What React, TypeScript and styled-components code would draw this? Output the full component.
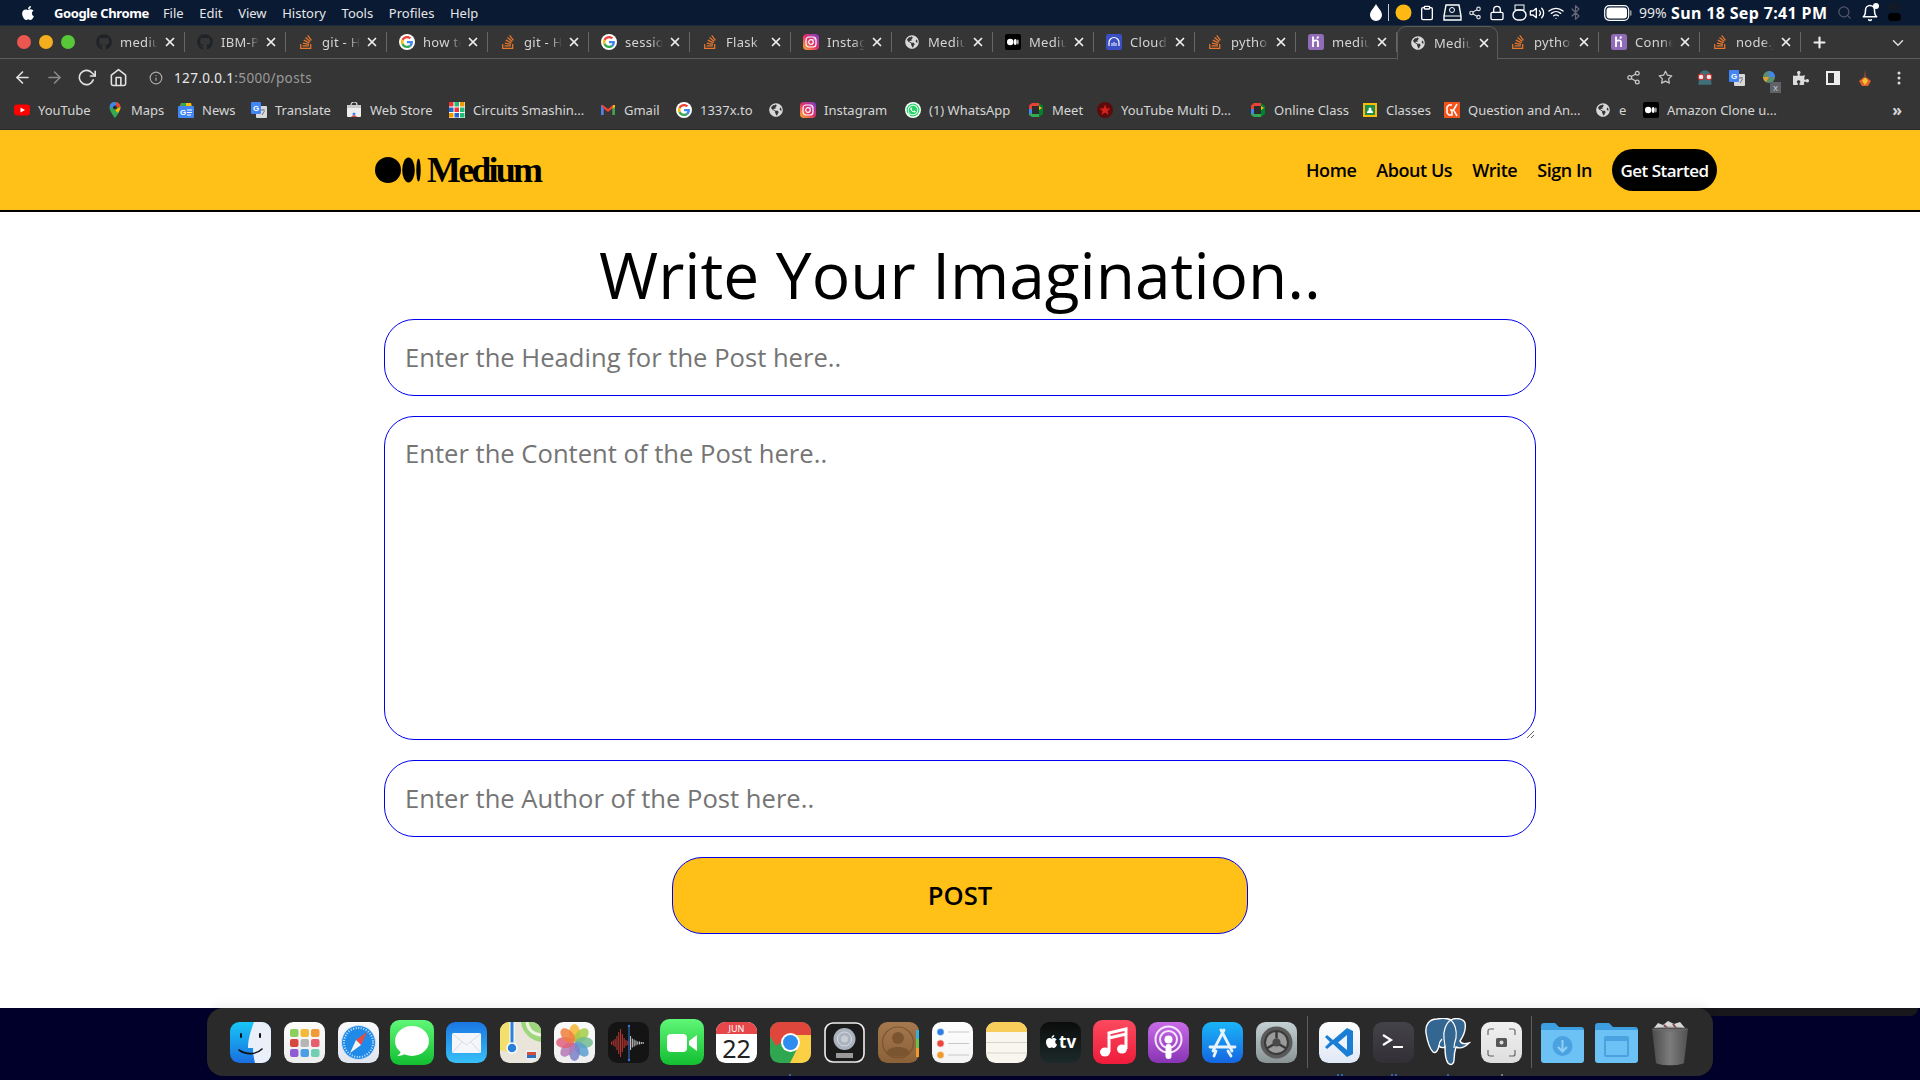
import React from 'react';
import styled, { createGlobalStyle } from 'styled-components';
import { FaApple, FaGithub, FaStackOverflow, FaWhatsapp, FaGlobeAmericas, FaPuzzlePiece } from 'react-icons/fa';
import { FiShare2, FiSearch, FiBell, FiArrowLeft, FiArrowRight, FiRotateCw, FiHome, FiInfo, FiPlus, FiChevronDown, FiX, FiStar, FiLock, FiWifi, FiBluetooth, FiVolume2, FiClipboard } from 'react-icons/fi';

const GlobalStyle = createGlobalStyle`
  html, body { margin: 0; padding: 0; background: #fff; }
  * { box-sizing: border-box; }
`;

const Screen = styled.div`
  position: relative;
  width: 1920px;
  height: 1080px;
  overflow: hidden;
  display: flex;
  flex-direction: column;
  font-family: "Open Sans", "Noto Sans", sans-serif;
`;

/* ---------- mac menu bar ---------- */
const MenuBar = styled.div`
  height: 25px;
  background: #0a1a33;
  display: flex;
  align-items: center;
  padding: 0 0 0 20px;
  color: #fff;
  font-family: "Noto Sans", sans-serif;
  font-size: 13px;
`;
const AppleMark = styled(FaApple)`
  font-size: 16px;
  margin-right: 18px;
`;
const MenuItem = styled.span<{ $bold?: boolean }>`
  font-weight: ${(p) => (p.$bold ? 700 : 400)};
  letter-spacing: ${(p) => (p.$bold ? '-0.38px' : '0')};
  margin-right: ${(p) => (p.$bold ? 14 : 15.6)}px;
  color: ${(p) => (p.$bold ? '#fff' : '#e6e6e6')};
`;
const StatusArea = styled.div`
  margin-left: auto;
  display: flex;
  align-items: center;
  height: 100%;
  width: 556px;
`;
const StatusIcon = styled.span<{ $w: number }>`
  width: ${(p) => p.$w}px;
  display: flex;
  justify-content: center;
  align-items: center;
  flex: none;
`;
const BatterySlot = styled.span`
  width: 50px;
  flex: none;
  display: flex;
  justify-content: flex-end;
  align-items: center;
  padding-right: 3px;
`;
const Percent = styled.span`
  font-size: 14px;
  color: #e6e6e6;
  margin: 0 4px 0 4px;
  width: 28px;
`;
const DateText = styled.span`
  font-size: 16px;
  font-weight: 700;
  letter-spacing: 0.35px;
  width: 164px;
  white-space: nowrap;
`;
const BellWrap = styled.span`
  position: relative;
  display: flex;
  &::after {
    content: '';
    position: absolute;
    top: -1px;
    right: 0;
    width: 6px;
    height: 6px;
    border-radius: 50%;
    background: #fff;
  }
`;

/* ---------- chrome tab strip ---------- */
const TabStrip = styled.div`
  position: relative;
  height: 34px;
  background: #353535;
  border-top: 1px solid #1d2a3a;
  border-bottom: 1px solid #5c5c5c;
  display: flex;
  align-items: center;
  padding-left: 17px;
  color: #ddd;
  font-family: "Noto Sans", sans-serif;
  font-size: 13px;
`;
const Lights = styled.div`
  display: flex;
  gap: 8px;
  width: 67px;
  flex: none;
`;
const Light = styled.i<{ $c: string }>`
  width: 14px;
  height: 14px;
  border-radius: 50%;
  background: ${(p) => p.$c};
`;
const Tab = styled.div<{ $active?: boolean }>`
  position: relative;
  width: 101px;
  height: ${(p) => (p.$active ? '34px' : '20px')};
  flex: none;
  display: flex;
  align-items: center;
  padding-left: 12px;
  border-right: 1px solid ${(p) => (p.$active ? 'transparent' : '#666')};
  ${(p) =>
    p.$active &&
    `
    background: #353535;
    border: 1px solid #5c5c5c;
    border-bottom: 1px solid #353535;
    border-radius: 9px 9px 0 0;
    margin-bottom: -1px;
  `}
`;
const TabIcon = styled.span`
  width: 16px;
  height: 16px;
  display: flex;
  align-items: center;
  justify-content: center;
  flex: none;
  margin-right: 8px;
`;
const TabTitle = styled.span`
  width: 38px;
  overflow: hidden;
  white-space: nowrap;
  color: #d4d4d4;
  letter-spacing: 0.3px;
  -webkit-mask-image: linear-gradient(to right, #000 70%, transparent 100%);
  mask-image: linear-gradient(to right, #000 70%, transparent 100%);
`;
const TabClose = styled(FiX)`
  position: absolute;
  left: 79px;
  top: 50%;
  margin-top: -7px;
  font-size: 14px;
  stroke-width: 3;
  color: #eee;
`;
const NewTab = styled(FiPlus)`
  margin-left: 10px;
  font-size: 17px;
  stroke-width: 3;
  color: #eee;
`;
const TabList = styled(FiChevronDown)`
  position: absolute;
  right: 13px;
  top: 8px;
  font-size: 18px;
  color: #ddd;
`;

/* ---------- address bar ---------- */
const Toolbar = styled.div`
  height: 37px;
  background: #353535;
  display: flex;
  align-items: center;
  padding-left: 13px;
  color: #ddd;
`;
const NavBtn = styled.span<{ $dim?: boolean }>`
  width: 32px;
  height: 20px;
  display: flex;
  align-items: center;
  color: ${(p) => (p.$dim ? '#8a8a8a' : '#e2e2e2')};
  font-size: 19px;
  flex: none;
`;
const SiteInfo = styled(FiInfo)`
  margin-left: 8px;
  font-size: 14px;
  color: #aaa;
  flex: none;
`;
const Url = styled.div`
  margin-left: 11px;
  font-family: "Noto Sans", sans-serif;
  font-size: 13.5px;
  letter-spacing: 0.35px;
  color: #9a9a9a;
`;
const UrlHost = styled.span`
  color: #e8e8e8;
`;
const ToolbarRight = styled.div`
  margin-left: auto;
  display: flex;
  align-items: center;
  padding-right: 5px;
`;
const ExtSlot = styled.span<{ $after?: number }>`
  position: relative;
  width: 32px;
  margin-right: ${(p) => p.$after ?? 0}px;
  display: flex;
  justify-content: center;
  align-items: center;
  color: #c8c8c8;
`;
const ExtBadge = styled.b`
  position: absolute;
  right: 4px;
  bottom: -7px;
  width: 11px;
  height: 11px;
  background: #5f6368;
  color: #ddd;
  font-size: 8px;
  line-height: 11px;
  text-align: center;
  font-weight: 400;
`;

/* ---------- bookmarks ---------- */
const Bookmarks = styled.div`
  height: 34px;
  background: #353535;
  display: flex;
  align-items: center;
  padding: 0 0 5px 14px;
  font-family: "Noto Sans", sans-serif;
  font-size: 13px;
  color: #d6d6d6;
  border-bottom: 1px solid #2a2a2a;
`;
const Bookmark = styled.div<{ $w: number }>`
  width: ${(p) => p.$w}px;
  flex: none;
  display: flex;
  align-items: center;
  gap: 8px;
  white-space: nowrap;
`;
const BookmarkIcon = styled.span`
  width: 16px;
  height: 16px;
  flex: none;
  display: flex;
  align-items: center;
  justify-content: center;
`;
const More = styled.span`
  margin-left: auto;
  margin-right: 18px;
  font-size: 16px;
  font-weight: 700;
`;

/* ---------- the page ---------- */
const Page = styled.main`
  flex: 1;
  background: #fff;
  display: flex;
  flex-direction: column;
  min-height: 0;
`;
const Header = styled.header`
  height: 82px;
  background: #ffc017;
  border-bottom: 2px solid #000;
  display: flex;
  align-items: center;
  justify-content: space-between;
  padding: 0 203px 0 375px;
  flex: none;
`;
const Logo = styled.div`
  display: flex;
  align-items: center;
  gap: 6px;
  height: 30px;
`;
const LogoWord = styled.span`
  font-family: "Liberation Serif", serif;
  font-weight: 700;
  font-size: 36px;
  letter-spacing: -2.8px;
  color: #000;
  line-height: 30px;
`;
const Links = styled.nav`
  display: flex;
  align-items: center;
  gap: 20px;
`;
const LinkItem = styled.a`
  font-size: 18px;
  font-weight: 600;
  letter-spacing: -0.45px;
  color: #000;
`;
const Started = styled.a`
  background: #000;
  color: #fff;
  font-size: 17px;
  font-weight: 600;
  letter-spacing: -0.5px;
  height: 42px;
  width: 105px;
  border-radius: 21px;
  display: flex;
  align-items: center;
  justify-content: center;
`;
const Title = styled.h1`
  margin: 0;
  height: 107px;
  padding-top: 19px;
  font-size: 64px;
  font-weight: 400;
  line-height: 88px;
  text-align: center;
  color: #000;
`;
const Form = styled.form`
  width: 1152px;
  margin: 0 auto;
  display: flex;
  flex-direction: column;
  align-items: center;
  gap: 20px;
`;
const Field = styled.input`
  width: 100%;
  height: 77px;
  border: 1px solid #0000ee;
  border-radius: 30px;
  padding: 0 20px;
  font-family: "Open Sans", sans-serif;
  font-size: 25.6px;
  outline: none;
  background: #fff;
  &::placeholder { color: #757575; }
`;
const Area = styled.textarea`
  width: 100%;
  height: 324px;
  border: 1px solid #0000ee;
  border-radius: 30px;
  padding: 19px 20px;
  font-family: "Open Sans", sans-serif;
  font-size: 25.6px;
  outline: none;
  background: #fff;
  display: block;
  &::placeholder { color: #757575; }
`;
const PostButton = styled.button`
  width: 576px;
  height: 77px;
  border: 1px solid #0000ee;
  border-radius: 30px;
  background: #ffc017;
  color: #000;
  font-family: "Open Sans", sans-serif;
  font-size: 25.6px;
  font-weight: 600;
`;

/* ---------- dock ---------- */
const DockArea = styled.footer`
  position: relative;
  height: 72px;
  flex: none;
  background: #00002a;
  padding-left: 207px;
`;
const WindowShadow = styled.div`
  position: absolute;
  left: 1700px;
  top: 0;
  width: 218px;
  height: 8px;
  background: #18181c;
  border-radius: 0 0 8px 8px;
`;
const Dock = styled.div`
  position: relative;
  width: 1506px;
  height: 68px;
  background: #2a2a2a;
  border-radius: 16px;
  box-shadow: 0 -4px 10px rgba(0, 0, 0, 0.05);
  display: flex;
  align-items: center;
  padding-left: 16px;
`;
const Slot = styled.div<{ $dots?: number; $dot?: string }>`
  position: relative;
  width: 54px;
  height: 54px;
  flex: none;
  display: flex;
  align-items: center;
  justify-content: center;
  &::after {
    content: '';
    display: ${(p) => (p.$dots ? 'block' : 'none')};
    position: absolute;
    bottom: -7px;
    left: ${(p) => (p.$dots === 2 ? 24 : 26)}px;
    width: 2px;
    height: 2px;
    border-radius: 50%;
    background: ${(p) => p.$dot ?? '#3a78d8'};
    box-shadow: ${(p) => (p.$dots === 2 ? `4px 0 0 ${p.$dot ?? '#3a78d8'}` : 'none')};
  }
`;
const DockDivider = styled.div<{ $w: number }>`
  width: ${(p) => p.$w}px;
  height: 52px;
  flex: none;
  display: flex;
  justify-content: center;
  &::before {
    content: '';
    width: 1px;
    background: #5e5e5e;
  }
`;

/* ---------- small coloured favicons ---------- */
const G = () => (
  <svg width="16" height="16" viewBox="0 0 48 48">
    <circle cx="24" cy="24" r="24" fill="#fff" />
    <path fill="#ea4335" d="M24 13c3 0 5.400 1 7.300 2.800l5.300-5.300C33.300 7.500 29 5.700 24 5.700c-7.200 0-13.400 4.100-16.400 10.100l6.200 4.800C15.200 16.200 19.200 13 24 13z" />
    <path fill="#4285f4" d="M41.800 24.500c0-1.300-.1-2.500-.3-3.700H24v7h10c-.4 2.300-1.700 4.300-3.700 5.600l5.900 4.600c3.500-3.200 5.600-8 5.600-13.500z" />
    <path fill="#fbbc05" d="M13.800 27.400c-.4-1.100-.6-2.300-.6-3.400s.2-2.300.6-3.400l-6.200-4.800C6.400 18.300 5.700 21.100 5.700 24s.7 5.700 1.900 8.200l6.200-4.800z" />
    <path fill="#34a853" d="M24 42.300c5 0 9.100-1.600 12.200-4.400l-5.900-4.600c-1.700 1.100-3.800 1.800-6.300 1.800-4.800 0-8.800-3.200-10.200-7.600l-6.200 4.800c3 6 9.200 10 16.400 10z" />
  </svg>
);
const So = () => <FaStackOverflow size={16} color="#e8762d" />;
const Globe = () => <FaGlobeAmericas size={14} color="#d8d8d8" />;
const Insta = () => (
  <svg width="16" height="16" viewBox="0 0 16 16">
    <defs>
      <linearGradient id="ig" x1="0" y1="1" x2="1" y2="0">
        <stop offset="0" stopColor="#fdb12b" />
        <stop offset=".5" stopColor="#e1306c" />
        <stop offset="1" stopColor="#7a3fd0" />
      </linearGradient>
    </defs>
    <rect width="16" height="16" rx="4" fill="url(#ig)" />
    <rect x="3" y="3" width="10" height="10" rx="3" fill="none" stroke="#fff" strokeWidth="1.2" />
    <circle cx="8" cy="8" r="2.300" fill="none" stroke="#fff" strokeWidth="1.2" />
    <circle cx="11" cy="5" r=".7" fill="#fff" />
  </svg>
);
const MediumFav = () => (
  <svg width="16" height="16" viewBox="0 0 16 16">
    <rect width="16" height="16" rx="2" fill="#000" />
    <ellipse cx="5.200" cy="8" rx="3.200" ry="3.300" fill="#fff" />
    <ellipse cx="10.200" cy="8" rx="1.500" ry="3" fill="#fff" />
    <ellipse cx="12.900" cy="8" rx=".6" ry="2.700" fill="#fff" />
  </svg>
);
const Cloud = () => (
  <svg width="16" height="16" viewBox="0 0 16 16">
    <rect width="16" height="16" rx="2" fill="#3b4fc4" />
    <path d="M3 12V8.500a5 5 0 0 1 10 0V12" fill="none" stroke="#fff" strokeWidth="1.200" />
    <path d="M6 12V9M8 12V8M10 12V9" stroke="#fff" strokeWidth="1" />
  </svg>
);
const Heroku = () => (
  <svg width="16" height="16" viewBox="0 0 16 16">
    <rect width="16" height="16" rx="2.500" fill="#8f6bb8" />
    <path d="M5 2.500V13M5 7.500c2-1.500 5-1.500 5 .5V13M10.500 2.500 9 4.500" fill="none" stroke="#fff" strokeWidth="1.800" />
  </svg>
);
const GithubFav = () => <FaGithub size={16} color="#1f2328" />;
const YouTubeFav = () => (
  <svg width="16" height="16" viewBox="0 0 16 16">
    <rect y="2.500" width="16" height="11" rx="3" fill="#f00" />
    <path d="M6.500 5.500 11 8l-4.500 2.500z" fill="#fff" />
  </svg>
);
const MapsFav = () => (
  <svg width="16" height="16" viewBox="0 0 16 16">
    <path d="M8 0a5.500 5.500 0 0 0-5.500 5.500C2.500 9.500 8 16 8 16s5.500-6.500 5.500-10.500A5.500 5.500 0 0 0 8 0z" fill="#34a853" />
    <path d="M3 3a5.500 5.500 0 0 1 5-3l1 3-5 4z" fill="#4285f4" />
    <path d="M9 .2A5.500 5.500 0 0 1 13.500 5L9 6z" fill="#ea4335" />
    <path d="M13.500 5c.2 2-1.500 4-2.500 6L8 8z" fill="#fbbc05" />
    <circle cx="8" cy="5.500" r="2" fill="#2a2a2a" />
  </svg>
);
const NewsFav = () => (
  <svg width="16" height="16" viewBox="0 0 16 16">
    <path d="M3 1h10l1 4H2z" fill="#fbbc05" />
    <path d="M3 1h5v4H3z" fill="#34a853" />
    <rect y="4" width="16" height="12" rx="1" fill="#4285f4" />
    <text x="2" y="13" fontSize="8" fontWeight="700" fontFamily="Liberation Sans" fill="#fff">G</text>
    <path d="M9 8h5M9 10.500h5M9 13h4" stroke="#fff" strokeWidth="1.200" />
  </svg>
);
const TranslateFav = () => (
  <svg width="16" height="16" viewBox="0 0 16 16">
    <rect x="5" y="4" width="11" height="12" rx="1" fill="#d9d9d9" />
    <rect width="10" height="12" rx="1" fill="#4285f4" />
    <text x="2" y="9" fontSize="8" fontWeight="700" fontFamily="Liberation Sans" fill="#fff">G</text>
    <path d="M10 8h4M12 7v1M11 13l2.500-4" stroke="#777" strokeWidth="1" />
  </svg>
);
const StoreFav = () => (
  <svg width="16" height="16" viewBox="0 0 16 16">
    <path d="M5 3a3 3 0 0 1 6 0" fill="none" stroke="#ddd" strokeWidth="1.200" />
    <rect x="1" y="3" width="14" height="12" rx="1" fill="#eee" />
    <path d="M5 15a3.500 3.500 0 0 1 6 0z" fill="#ea4335" />
    <circle cx="8" cy="12" r="1.500" fill="#4285f4" />
    <rect x="1" y="3" width="14" height="3" fill="#ccc" />
  </svg>
);
const CircuitsFav = () => (
  <svg width="16" height="16" viewBox="0 0 16 16">
    <rect width="16" height="16" fill="#fff" />
    {['#e33', '#2b7', '#e90', '#26c', '#e33', '#2b7', '#e90', '#26c', '#2b7'].map((c, i) => (
      <rect key={i} x={(i % 3) * 5.500} y={Math.floor(i / 3) * 5.500} width="4.500" height="4.500" fill={c} />
    ))}
  </svg>
);
const GmailFav = () => (
  <svg width="16" height="16" viewBox="0 0 16 16">
    <path d="M1 3v10h2.500V6.500L8 10l4.500-3.500V13H15V3l-2 0-5 4-5-4z" fill="#ea4335" />
    <path d="M1 3v10h2.500V6.500z" fill="#4285f4" />
    <path d="M15 3v10h-2.500V6.500z" fill="#34a853" />
    <path d="M13 3l2 0v2l-2.500 1.500z" fill="#fbbc05" />
  </svg>
);
const WhatsFav = () => (
  <svg width="16" height="16" viewBox="0 0 16 16">
    <circle cx="8" cy="8" r="8" fill="#fff" />
    <circle cx="8" cy="8" r="6.500" fill="#25d366" />
    <FaWhatsapp x="2" y="2" size={12} color="#fff" />
  </svg>
);
const MeetFav = () => (
  <svg width="16" height="16" viewBox="0 0 16 16">
    <rect x="2" y="3" width="9" height="10" fill="#2b2b2b" />
    <path d="M1 7V3.500L4 1h7v3H4v3z" fill="#ea4335" />
    <path d="M1 7h3v5H1z" fill="#4285f4" />
    <path d="M4 15h7v-3H4l-3-1v2z" fill="#34a853" />
    <path d="M11 1v14l4-3V4z" fill="#00832d" />
    <path d="M11 4v4l3-2z" fill="#fbbc05" />
  </svg>
);
const YtMultiFav = () => (
  <svg width="16" height="16" viewBox="0 0 16 16">
    <circle cx="8" cy="8" r="8" fill="#5c0b0b" />
    <path d="M8 2.500 9.500 6.500H13.500L10.500 9l1 4L8 10.500 4.500 13l1-4-3-2.500h4z" fill="#d8201f" />
  </svg>
);
const ClassesFav = () => (
  <svg width="16" height="16" viewBox="0 0 16 16">
    <rect x="1" y="1" width="14" height="14" fill="#fbbc05" />
    <rect x="3" y="3" width="10" height="10" fill="#1f8e4a" />
    <circle cx="8" cy="7" r="1.500" fill="#fff" />
    <path d="M5 11a3 3 0 0 1 6 0z" fill="#fff" />
  </svg>
);
const GkFav = () => (
  <svg width="16" height="16" viewBox="0 0 16 16">
    <rect width="16" height="16" fill="#f2541b" />
    <path d="M8 3H5L3 5v6l2 2h3V8H6M13 2 9.500 8 13 14" fill="none" stroke="#fff" strokeWidth="1.500" />
  </svg>
);

/* ---------- dock icons, 41 box ---------- */
const Tile = ({ id, a, b, children, w = 41, h = 41 }: { id: string; a: string; b: string; children?: React.ReactNode; w?: number; h?: number }) => (
  <svg width={w} height={h} viewBox={`0 0 ${w} ${h}`}>
    <defs>
      <linearGradient id={id} x1="0" y1="0" x2="0" y2="1">
        <stop offset="0" stopColor={a} />
        <stop offset="1" stopColor={b} />
      </linearGradient>
    </defs>
    <rect width={w} height={h} rx="9.500" fill={`url(#${id})`} />
    {children}
  </svg>
);

const Finder = () => (
  <Tile id="finder" a="#17c6f7" b="#1a6fe0">
    <path d="M24 0h8a9 9 0 0 1 9 9v23a9 9 0 0 1-9 9h-7c-1-4-2-10-2-15h-5c0-9 3-18 6-26z" fill="#e9f0fa" />
    <rect x="10" y="11" width="2" height="5" rx="1" fill="#111" />
    <rect x="29" y="11" width="2" height="5" rx="1" fill="#111" />
    <path d="M9 28c7 5 17 5 23-1" fill="none" stroke="#111" strokeWidth="1.600" strokeLinecap="round" />
  </Tile>
);
const Launchpad = () => (
  <Tile id="lp" a="#fdfdfd" b="#ececec">
    {['#8ccf5e', '#f4b93b', '#f19a38', '#d8473c', '#b5b5b5', '#e65f6e', '#8e5bd4', '#4b9ee6', '#6fcfb0'].map((c, i) => (
      <rect key={i} x={6 + (i % 3) * 10.500} y={7 + Math.floor(i / 3) * 10} width="8.500" height="8" rx="2" fill={c} />
    ))}
  </Tile>
);
const Safari = () => (
  <Tile id="saf" a="#fafafa" b="#dfe4ee">
    <circle cx="20.500" cy="20.500" r="17" fill="#1f8ae8" stroke="#d6e6f7" strokeWidth="1" />
    <circle cx="20.500" cy="20.500" r="14.500" fill="none" stroke="#cfe6fb" strokeWidth="2" strokeDasharray="1 1.600" />
    <path d="M29 10 18 18l5 5z" fill="#f0483e" />
    <path d="M12 31l6-13 5 5z" fill="#f4f4f4" />
  </Tile>
);
const Messages = () => (
  <Tile id="msg" a="#5ff777" b="#12be30" w={44} h={45}>
    <ellipse cx="22" cy="21" rx="17" ry="15" fill="#fff" />
    <path d="M11 30c0 3-2 5-4 6 4 0 7-1 9-3z" fill="#fff" />
  </Tile>
);
const Mail = () => (
  <Tile id="mail" a="#1a76e3" b="#38c0f8">
    <rect x="6" y="11" width="29" height="20" rx="1.500" fill="#f4f6fa" />
    <path d="M6.500 12 20.500 23 34.500 12M6.500 30.500 16 20M34.500 30.500 25 20" fill="none" stroke="#cfd6e0" strokeWidth=".8" />
  </Tile>
);
const Maps = () => (
  <svg width="41" height="41" viewBox="0 0 41 41">
    <rect width="41" height="41" rx="9.500" fill="#e9e5da" />
    <path d="M21 0h11a9 9 0 0 1 9 9v11c-8-1-19-8-20-20z" fill="#9dd67d" />
    <path d="M27 0c1 8 6 12 14 13" fill="none" stroke="#eef3e2" strokeWidth="3" />
    <path d="M0 9a9 9 0 0 1 9-9h5L8 30 0 28z" fill="#f2df6e" />
    <rect x="9.500" y="0" width="5" height="30" fill="#fff" />
    <rect x="10.500" y="0" width="3" height="26" fill="#2a7fdb" />
    <circle cx="12" cy="26" r="5" fill="#2a7fdb" stroke="#fff" strokeWidth="1.500" />
    <path d="M26 28h11v6c0 3-3 5-5.500 6-2.500-1-5.500-3-5.500-6z" fill="#e8eef5" />
    <rect x="27" y="30" width="9" height="3" fill="#d2503c" />
    <rect x="27" y="33" width="9" height="3" fill="#2f6fc0" />
  </svg>
);
const Photos = () => (
  <Tile id="ph" a="#fbfbfb" b="#eeeeee">
    {['#f7b731', '#a5cc45', '#74bc8e', '#5b9fd0', '#7a80c8', '#b579b5', '#e0607a', '#ef7f3f'].map((c, i) => (
      <ellipse key={i} cx="20.500" cy="11" rx="5.500" ry="9" fill={c} opacity=".85" transform={`rotate(${i * 45} 20.500 20.500)`} />
    ))}
  </Tile>
);
const Voice = () => (
  <svg width="41" height="41" viewBox="0 0 41 41">
    <rect width="41" height="41" rx="9.500" fill="#141414" />
    {[3, 5, 8, 14, 22, 28, 18, 10, 6, 4].map((h, i) => (
      <rect key={i} x={3 + i * 1.800} y={21 - h / 2} width="1.100" height={h} fill="#b5352f" />
    ))}
    {[14, 9, 7, 5, 3, 3, 2, 2].map((h, i) => (
      <rect key={i} x={22 + i * 1.800} y={21 - h / 2} width="1.100" height={h} fill="#bbb" />
    ))}
    <path d="M21 3v36" stroke="#3a78d8" strokeWidth="1" />
    <circle cx="21" cy="4" r="1.200" fill="#3a78d8" />
    <circle cx="21" cy="38" r="1.200" fill="#3a78d8" />
  </svg>
);
const FaceTime = () => (
  <Tile id="ft" a="#5ff777" b="#12be30" w={44} h={46}>
    <rect x="7" y="15" width="20" height="18" rx="4" fill="#fff" />
    <path d="M29 22l8-6v16l-8-6z" fill="#fff" />
  </Tile>
);
const Calendar = () => (
  <svg width="41" height="41" viewBox="0 0 41 41">
    <rect width="41" height="41" rx="9.500" fill="#fff" />
    <path d="M0 12V9.500A9.500 9.500 0 0 1 9.500 0h22A9.500 9.500 0 0 1 41 9.500V12z" fill="#e8474a" />
    <text x="20.500" y="9.500" textAnchor="middle" fontSize="9" fontFamily="Noto Sans" fill="#fff">JUN</text>
    <text x="20.500" y="36" textAnchor="middle" fontSize="25" fontFamily="Noto Sans" fill="#222">22</text>
  </svg>
);
const ChromeDock = () => (
  <svg width="41" height="41" viewBox="0 0 41 41">
    <rect width="41" height="41" rx="9.500" fill="#2fa650" />
    <path d="M9.500 0h22A9.500 9.500 0 0 1 41 9.500V14H20.500L6 24 0 14V9.500A9.500 9.500 0 0 1 9.500 0z" fill="#e0473c" />
    <path d="M41 13v18.500a9.500 9.500 0 0 1-9.500 9.500H20l7-14-6.500-14z" fill="#fbd045" />
    <circle cx="20.500" cy="20.500" r="9.500" fill="#fff" />
    <circle cx="20.500" cy="20.500" r="7.500" fill="#2d8cf0" />
  </svg>
);
const DiskUtil = () => (
  <svg width="41" height="41" viewBox="0 0 41 41">
    <rect x="1" y="1" width="39" height="39" rx="8" fill="#1b1b1b" stroke="#eee" strokeWidth="1.600" />
    <circle cx="20.500" cy="17" r="11" fill="#aab2bd" />
    <circle cx="20.500" cy="17" r="7" fill="none" stroke="#d8dde3" strokeWidth="1" />
    <circle cx="20.500" cy="17" r="3.500" fill="#c8cdd3" />
    <rect x="12" y="31" width="17" height="5" fill="#999" />
  </svg>
);
const Contacts = () => (
  <Tile id="ct" a="#a5784e" b="#8b6238">
    <rect x="38" y="8" width="3" height="9" fill="#35b0d6" />
    <rect x="38" y="17" width="3" height="9" fill="#6cbf4b" />
    <rect x="38" y="26" width="3" height="9" fill="#f09a2e" />
    <circle cx="20" cy="20.500" r="15.500" fill="none" stroke="#7a5530" strokeWidth="1.200" />
    <circle cx="20" cy="16" r="6" fill="#7a5530" />
    <path d="M8 31c2-8 22-8 24 0-6 5-18 5-24 0z" fill="#7a5530" />
  </Tile>
);
const Reminders = () => (
  <Tile id="rm" a="#fff" b="#f3f3f3">
    {['#2f7ee0', '#e8463e', '#f09a2e'].map((c, i) => (
      <g key={c}>
        <circle cx="8.500" cy={10 + i * 11.500} r="3" fill={c} stroke={c} strokeOpacity=".4" strokeWidth="1.500" />
        <rect x="16" y={9.500 + i * 11.500} width="21" height="1" fill="#c8c8c8" />
      </g>
    ))}
  </Tile>
);
const Notes = () => (
  <svg width="41" height="41" viewBox="0 0 41 41">
    <rect width="41" height="41" rx="9.500" fill="#f8f6ee" />
    <path d="M0 9.500A9.500 9.500 0 0 1 9.500 0h22A9.500 9.500 0 0 1 41 9.500V10H0z" fill="#f8cd5a" />
    <path d="M0 20.500h41M0 31h41" stroke="#d5d3cb" strokeWidth="1" />
  </svg>
);
const TvDock = () => (
  <Tile id="tv" a="#0c0c0c" b="#1c2a2a">
    <FaApple x="4" y="12" size={15} color="#fff" />
    <text x="19" y="26" fontSize="17" fontWeight="700" fontFamily="Noto Sans" fill="#fff">tv</text>
  </Tile>
);
const Music = () => (
  <Tile id="mu" a="#fb4a5e" b="#ee1c3a" w={43} h={44}>
    <path d="M16 12v20M33 9v20M16 13l17-4v5l-17 4z" fill="none" stroke="#fff" strokeWidth="3" />
    <ellipse cx="12" cy="32" rx="5" ry="4.500" fill="#fff" />
    <ellipse cx="29" cy="29" rx="5" ry="4.500" fill="#fff" />
  </Tile>
);
const Podcasts = () => (
  <Tile id="pc" a="#c86be8" b="#8834b4">
    <circle cx="20.500" cy="17.500" r="13" fill="none" stroke="#f5e6fb" strokeWidth="2" />
    <circle cx="20.500" cy="17.500" r="8.500" fill="none" stroke="#f5e6fb" strokeWidth="2" />
    <circle cx="20.500" cy="17.500" r="4" fill="#fff" />
    <rect x="17.500" y="22" width="6" height="15" rx="3" fill="#fff" />
  </Tile>
);
const AppStore = () => (
  <Tile id="as" a="#1ab5f8" b="#1566e0">
    <path d="M22 8 11 29M19 8l11 21M8 25h25M26 29l3 5M12 34l2-5" fill="none" stroke="#e8f3fd" strokeWidth="2.800" strokeLinecap="round" />
  </Tile>
);
const SystemPrefs = () => (
  <Tile id="sp" a="#c3d0d4" b="#8a9497">
    <circle cx="20.500" cy="20.500" r="16" fill="#5a5a5a" />
    <circle cx="20.500" cy="20.500" r="11.500" fill="#9a9a9a" stroke="#3a3a3a" strokeWidth="2" />
    <circle cx="20.500" cy="20.500" r="4" fill="#4a4a4a" />
    <path d="M20.500 9v7.500M10.500 26.500l7-4M30.500 26.500l-7-4" stroke="#3a3a3a" strokeWidth="2.500" />
  </Tile>
);
const VsCode = () => (
  <Tile id="vs" a="#ffffff" b="#dfe8f6">
    <path d="M28 6l6 3v23l-6 3-14-13-6 5-2-2 5-5-5-5 2-2 6 5z" fill="#1a7fd4" />
    <path d="M28 13 19 20.500 28 28z" fill="#eef4fb" />
  </Tile>
);
const Terminal = () => (
  <Tile id="tm" a="#45434a" b="#322f36">
    <path d="M10 13l8 5-8 5" fill="none" stroke="#fff" strokeWidth="2.200" />
    <rect x="20" y="24" width="10" height="2" fill="#fff" />
  </Tile>
);
const Postgres = () => (
  <svg width="46" height="48" viewBox="0 0 46 48">
    <path
      d="M12 1C4 1 0 7 1 15c1 6 3 15 7 19 3 2 5-2 6-6 2 2 4 2 6 1 0 6 0 12 3 16 3 3 6 1 6-3 0-6 1-10 2-13 4 2 9 0 13-4-4 1-8 1-9-2 4-6 6-13 5-18C39 1 31-1 26 2 22 0 16 0 12 1z"
      fill="#336791"
      stroke="#fff"
      strokeWidth="1.400"
    />
    <path d="M26 2c-5 3-8 11-7 18 0 3 1 6 1 9M26 2c4 4 6 10 5 18-1 3-2 6-2 10M14 28c0-3 1-5 3-7" fill="none" stroke="#fff" strokeWidth="1.200" />
  </svg>
);
const Screenshot = () => (
  <Tile id="ss" a="#f0f0f0" b="#dedede">
    <path d="M7 13V9a2 2 0 0 1 2-2h4M28 7h4a2 2 0 0 1 2 2v4M34 28v4a2 2 0 0 1-2 2h-4M13 34H9a2 2 0 0 1-2-2v-4" fill="none" stroke="#666" strokeWidth="1.200" />
    <rect x="15" y="16" width="11" height="9" rx="1.500" fill="#555" />
    <circle cx="20.500" cy="20.500" r="2" fill="#ddd" />
  </Tile>
);
const Folder = ({ kind }: { kind: 'down' | 'window' }) => (
  <svg width="43" height="42" viewBox="0 0 43 42">
    <path d="M0 5a3 3 0 0 1 3-3h11l4 4h22a3 3 0 0 1 3 3v3H0z" fill="#3d9ee0" />
    <path d="M0 9h43v30a3 3 0 0 1-3 3H3a3 3 0 0 1-3-3z" fill="#6cc1f5" />
    {kind === 'down' ? (
      <g>
        <circle cx="21.500" cy="25" r="10" fill="#4aa3e0" />
        <path d="M21.500 19v11M17 26l4.500 4.500L26 26" fill="none" stroke="#8fd0f8" strokeWidth="2" />
      </g>
    ) : (
      <g>
        <rect x="9" y="15" width="25" height="21" rx="2" fill="#4aa3e0" />
        <rect x="11" y="20" width="21" height="14" fill="#6cc1f5" />
      </g>
    )}
  </svg>
);
const Trash = () => (
  <svg width="38" height="47" viewBox="0 0 38 47">
    <defs>
      <linearGradient id="bin" x1="0" y1="0" x2="1" y2="0">
        <stop offset="0" stopColor="#4a4a4a" />
        <stop offset=".5" stopColor="#7c7c7c" />
        <stop offset="1" stopColor="#505050" />
      </linearGradient>
    </defs>
    <path d="M1 10h36l-4 34c-4 3-24 3-28 0z" fill="url(#bin)" />
    <path d="M3 9l4-5 5 2 5-4 6 3 6-2 5 6z" fill="#d8d8d8" />
    <path d="M13 6l4 4M22 5l3 4" stroke="#8a4b4b" strokeWidth="2" />
    <ellipse cx="19" cy="10" rx="18" ry="2.500" fill="#6a6a6a" opacity=".6" />
  </svg>
);

const tabs: [React.ReactNode, string][] = [
  [<GithubFav />, 'medium'],
  [<GithubFav />, 'IBM-Project'],
  [<So />, 'git - How'],
  [<G />, 'how to'],
  [<So />, 'git - How'],
  [<G />, 'session'],
  [<So />, 'Flask'],
  [<Insta />, 'Instagram'],
  [<Globe />, 'Medium'],
  [<MediumFav />, 'Medium'],
  [<Cloud />, 'Cloudinary'],
  [<So />, 'python'],
  [<Heroku />, 'medium'],
  [<Globe />, 'Medium'],
  [<So />, 'python'],
  [<Heroku />, 'Connect'],
  [<So />, 'node.js'],
];

const bookmarks: [React.ReactNode, string, number][] = [
  [<YouTubeFav />, 'YouTube', 93],
  [<MapsFav />, 'Maps', 71],
  [<NewsFav />, 'News', 73],
  [<TranslateFav />, 'Translate', 95],
  [<StoreFav />, 'Web Store', 103],
  [<CircuitsFav />, 'Circuits Smashin...', 151],
  [<GmailFav />, 'Gmail', 76],
  [<G />, '1337x.to', 92],
  [<Globe />, '', 32],
  [<Insta />, 'Instagram', 105],
  [<WhatsFav />, '(1) WhatsApp', 123],
  [<MeetFav />, 'Meet', 69],
  [<YtMultiFav />, 'YouTube Multi D...', 153],
  [<MeetFav />, 'Online Class', 112],
  [<ClassesFav />, 'Classes', 82],
  [<GkFav />, 'Question and An...', 151],
  [<Globe />, 'e', 48],
  [<MediumFav />, 'Amazon Clone u...', 150],
];

export default function App() {
  return (
    <Screen>
      <GlobalStyle />
      <MenuBar>
        <AppleMark />
        <MenuItem $bold>Google Chrome</MenuItem>
        {['File', 'Edit', 'View', 'History', 'Tools', 'Profiles', 'Help'].map((m) => (
          <MenuItem key={m}>{m}</MenuItem>
        ))}
        <StatusArea>
          <StatusIcon $w={24}>
            <svg width="12" height="17" viewBox="0 0 12 17"><path d="M6 0c2 4 6 7 6 11a6 6 0 0 1-12 0C0 7 4 4 6 0z" fill="#fff" /></svg>
          </StatusIcon>
          <svg width="1" height="17"><rect width="1" height="17" fill="#ccc" /></svg>
          <StatusIcon $w={28}>
            <svg width="17" height="17"><circle cx="8.500" cy="8.500" r="8" fill="#fdb913" /></svg>
          </StatusIcon>
          <StatusIcon $w={20}><FiClipboard size={16} color="#fff" /></StatusIcon>
          <StatusIcon $w={30}>
            <svg width="19" height="17" viewBox="0 0 19 17"><path d="M3 1h13l2 11v4H1v-4z" fill="none" stroke="#fff" strokeWidth="1.400" /><path d="M1 12h17" stroke="#fff" /><circle cx="9" cy="6" r="2.500" fill="none" stroke="#fff" /></svg>
          </StatusIcon>
          <StatusIcon $w={16}><FiShare2 size={14} color="#ddd" /></StatusIcon>
          <StatusIcon $w={28}><FiLock size={16} color="#fff" /></StatusIcon>
          <StatusIcon $w={16}>
            <svg width="15" height="17" viewBox="0 0 15 17"><rect x="1" y="6" width="13" height="10" rx="5" fill="none" stroke="#fff" strokeWidth="1.400" /><rect x="3" y="1" width="9" height="5" fill="none" stroke="#fff" /></svg>
          </StatusIcon>
          <StatusIcon $w={20}><FiVolume2 size={16} color="#fff" /></StatusIcon>
          <StatusIcon $w={18}><FiWifi size={16} color="#fff" /></StatusIcon>
          <StatusIcon $w={20}><FiBluetooth size={15} color="#667" /></StatusIcon>
          <BatterySlot>
            <svg width="28" height="16" viewBox="0 0 28 16"><rect x=".7" y=".7" width="24" height="14.600" rx="4.500" fill="none" stroke="#fff" strokeWidth="1.200" /><rect x="2.500" y="2.500" width="20.500" height="11" rx="3" fill="#fff" /><rect x="26" y="5.500" width="1.500" height="5" fill="#999" /></svg>
          </BatterySlot>
          <Percent>99%</Percent>
          <DateText>Sun 18 Sep 7:41 PM</DateText>
          <StatusIcon $w={18}><FiSearch size={15} color="#556" /></StatusIcon>
          <StatusIcon $w={34}><BellWrap><FiBell size={18} color="#fff" /></BellWrap></StatusIcon>
          <StatusIcon $w={14}>
            <svg width="13" height="19" viewBox="0 0 13 19"><rect width="13" height="8" rx="4" fill="#111a26" /><rect y="10" width="13" height="8" rx="4" fill="#000" /></svg>
          </StatusIcon>
        </StatusArea>
      </MenuBar>
      <TabStrip>
        <Lights>
          <Light $c="#ec5650" />
          <Light $c="#f4ae1e" />
          <Light $c="#58c73a" />
        </Lights>
        {tabs.map(([icon, title], i) => (
          <Tab key={i} $active={i === 13}>
            <TabIcon>{icon}</TabIcon>
            <TabTitle>{title}</TabTitle>
            <TabClose />
          </Tab>
        ))}
        <NewTab />
        <TabList />
      </TabStrip>
      <Toolbar>
        <NavBtn><FiArrowLeft /></NavBtn>
        <NavBtn $dim><FiArrowRight /></NavBtn>
        <NavBtn><FiRotateCw /></NavBtn>
        <NavBtn><FiHome /></NavBtn>
        <SiteInfo />
        <Url><UrlHost>127.0.0.1</UrlHost>:5000/posts</Url>
        <ToolbarRight>
          <ExtSlot><FiShare2 size={15} /></ExtSlot>
          <ExtSlot $after={8}><FiStar size={15} /></ExtSlot>
          <ExtSlot>
            <svg width="20" height="20" viewBox="0 0 18 18"><path d="M4 7a5 5 0 0 1 10 0l1 8H3z" fill="#3f6f78" /><circle cx="5.500" cy="8" r="2.500" fill="#eee" stroke="#c33" /><circle cx="12.500" cy="8" r="2.500" fill="#eee" stroke="#c33" /></svg>
          </ExtSlot>
          <ExtSlot><TranslateFav /></ExtSlot>
          <ExtSlot>
            <svg width="16" height="16" viewBox="0 0 16 16"><circle cx="8" cy="7" r="6" fill="#5b8f6a" /><path d="M8 1a6 6 0 0 1 6 6H8z" fill="#4285f4" /><path d="M2 7a6 6 0 0 0 3 5l3-5z" fill="#e0a030" /></svg>
            <ExtBadge>X</ExtBadge>
          </ExtSlot>
          <ExtSlot><FaPuzzlePiece size={16} color="#ddd" /></ExtSlot>
          <ExtSlot>
            <svg width="14" height="14"><rect x="1" y="1" width="12" height="12" fill="none" stroke="#eee" strokeWidth="2" /><rect x="8" y="1" width="5" height="12" fill="#eee" /></svg>
          </ExtSlot>
          <ExtSlot $after={2}>
            <svg width="14" height="18" viewBox="0 0 14 18"><path d="M7 0l1 8 5 4-3 5H4L1 12l5-4z" fill="#e2602a" /><path d="M7 8l3 4-3 4-3-4z" fill="#f2c230" /><path d="M7 0v9" stroke="#333" /></svg>
          </ExtSlot>
          <ExtSlot>
            <svg width="4" height="14"><circle cx="2" cy="2" r="1.500" fill="#ddd" /><circle cx="2" cy="7" r="1.500" fill="#ddd" /><circle cx="2" cy="12" r="1.500" fill="#ddd" /></svg>
          </ExtSlot>
        </ToolbarRight>
      </Toolbar>
      <Bookmarks>
        {bookmarks.map(([icon, label, w], i) => (
          <Bookmark key={i} $w={w}>
            <BookmarkIcon>{icon}</BookmarkIcon>
            {label}
          </Bookmark>
        ))}
        <More>»</More>
      </Bookmarks>
      <Page>
        <Header>
          <Logo>
            <svg width="46" height="26" viewBox="0 0 46 26">
              <ellipse cx="13" cy="13" rx="13" ry="13" fill="#000" />
              <ellipse cx="33.500" cy="13" rx="6.300" ry="12.500" fill="#000" />
              <ellipse cx="43.500" cy="13" rx="2.200" ry="11.500" fill="#000" />
            </svg>
            <LogoWord>Medium</LogoWord>
          </Logo>
          <Links>
            <LinkItem>Home</LinkItem>
            <LinkItem>About Us</LinkItem>
            <LinkItem>Write</LinkItem>
            <LinkItem>Sign In</LinkItem>
            <Started>Get Started</Started>
          </Links>
        </Header>
        <Title>Write Your Imagination..</Title>
        <Form onSubmit={(e) => e.preventDefault()}>
          <Field placeholder="Enter the Heading for the Post here.." />
          <Area placeholder="Enter the Content of the Post here.." />
          <Field placeholder="Enter the Author of the Post here.." />
          <PostButton>POST</PostButton>
        </Form>
      </Page>
      <DockArea>
        <WindowShadow />
        <Dock>
          <Slot><Finder /></Slot>
          <Slot><Launchpad /></Slot>
          <Slot><Safari /></Slot>
          <Slot><Messages /></Slot>
          <Slot><Mail /></Slot>
          <Slot><Maps /></Slot>
          <Slot><Photos /></Slot>
          <Slot><Voice /></Slot>
          <Slot><FaceTime /></Slot>
          <Slot><Calendar /></Slot>
          <Slot $dots={1}><ChromeDock /></Slot>
          <Slot><DiskUtil /></Slot>
          <Slot><Contacts /></Slot>
          <Slot><Reminders /></Slot>
          <Slot><Notes /></Slot>
          <Slot><TvDock /></Slot>
          <Slot><Music /></Slot>
          <Slot><Podcasts /></Slot>
          <Slot><AppStore /></Slot>
          <Slot><SystemPrefs /></Slot>
          <DockDivider $w={9.500} />
          <Slot $dots={2}><VsCode /></Slot>
          <Slot $dots={2}><Terminal /></Slot>
          <Slot $dots={1}><Postgres /></Slot>
          <Slot $dots={1} $dot="#999"><Screenshot /></Slot>
          <DockDivider $w={6.500} />
          <Slot><Folder kind="down" /></Slot>
          <Slot><Folder kind="window" /></Slot>
          <Slot><Trash /></Slot>
        </Dock>
      </DockArea>
    </Screen>
  );
}
